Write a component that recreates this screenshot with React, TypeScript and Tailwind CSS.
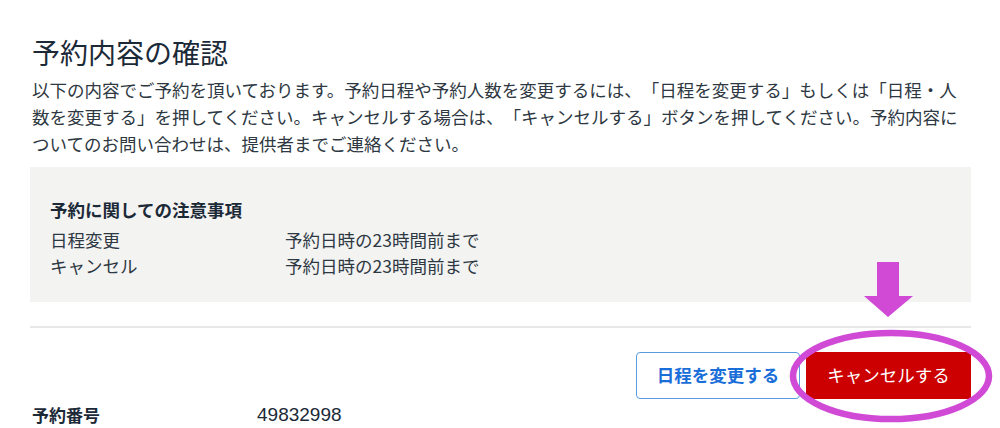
import React from "react";

export default function App() {
  const jp = { fontFamily: '"Noto Sans CJK JP", "Noto Sans", sans-serif' };
  return (
    <div className="w-[1000px] h-[428px] bg-white overflow-hidden relative [text-spacing-trim:space-all]" style={jp}>
      <div className="ml-[30px] w-[941px] pt-[34px]">
        <h1 className="pl-[2px] text-[28px] leading-[36px] text-[#1c2a38] font-normal">予約内容の確認</h1>
        <p className="pl-[2px] mt-[6px] text-[17.5px] leading-[27px] text-[#2e3842] [text-spacing-trim:space-all]">
          以下の内容でご予約を頂いております。予約日程や予約人数を変更するには、「日程を変更する」もしくは「日程・人数を変更する」を押してください。キャンセルする場合は、「キャンセルする」ボタンを押してください。予約内容についてのお問い合わせは、提供者までご連絡ください。
        </p>
        <div className="mt-[10px] h-[135px] bg-[#f3f3f2] pl-[20px] pt-[30px]">
          <div className="text-[17.5px] leading-[26px] font-bold text-[#1c2a38]">予約に関しての注意事項</div>
          <div className="mt-[4px] text-[17.5px] leading-[26px] text-[#2e3842]">
            <div className="flex">
              <div className="w-[235px]">日程変更</div>
              <div>予約日時の23時間前まで</div>
            </div>
            <div className="flex">
              <div className="w-[235px]">キャンセル</div>
              <div>予約日時の23時間前まで</div>
            </div>
          </div>
        </div>
        <div className="mt-[24px] h-[2px] bg-[#e8e8e8]" />
        <div className="relative mt-[24px] flex justify-end gap-[6px]">
          <button className="w-[164px] h-[47px] rounded-[4px] border border-[#5b9be0] bg-white text-[#1a6ed8] text-[17.5px] font-bold">
            日程を変更する
          </button>
          <button className="w-[165px] h-[47px] rounded-[2px] bg-[#cc0000] text-white text-[17.5px]">
            キャンセルする
          </button>
        </div>
        <div className="mt-[3px] flex items-center pl-[2px] h-[26px]">
          <div className="w-[225px] text-[17px] leading-[26px] font-bold text-[#1c2a38]">予約番号</div>
          <div className="text-[19px] leading-[26px] text-[#1c2a38]" style={{ fontFamily: '"Liberation Sans", Arial, sans-serif' }}>49832998</div>
        </div>
      </div>
      <svg className="absolute left-0 top-0 pointer-events-none" width="1000" height="428" viewBox="0 0 1000 428">
        <path d="M877 262 H899 V296 H913 L888 317 L864 296 H877 Z" fill="#d04ad6" />
        <ellipse cx="891" cy="376" rx="98" ry="43" fill="none" stroke="#d04ad6" strokeWidth="6.5" />
      </svg>
    </div>
  );
}
